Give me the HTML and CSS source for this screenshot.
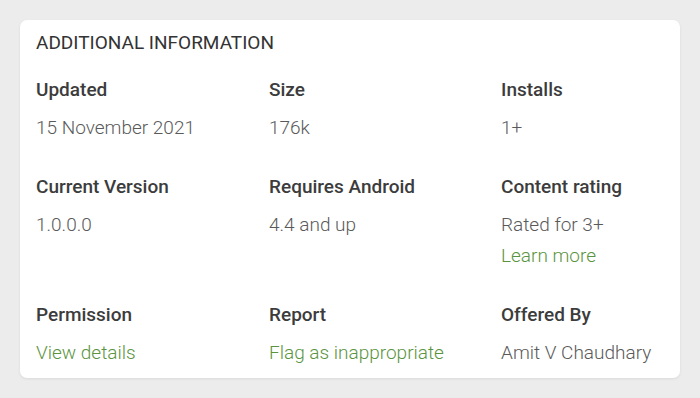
FILE: index.html
```html
<!DOCTYPE html>
<html>
<head>
<meta charset="utf-8">
<link rel="stylesheet" href="styles.css">
</head>
<body>
<section class="card">
  <h2 class="title">ADDITIONAL INFORMATION</h2>
  <div class="grid">
    <div class="cell">
      <div class="label">Updated</div>
      <div class="value">15 November 2021</div>
    </div>
    <div class="cell">
      <div class="label">Size</div>
      <div class="value">176k</div>
    </div>
    <div class="cell">
      <div class="label">Installs</div>
      <div class="value">1+</div>
    </div>
    <div class="cell">
      <div class="label">Current Version</div>
      <div class="value">1.0.0.0</div>
    </div>
    <div class="cell">
      <div class="label">Requires Android</div>
      <div class="value">4.4 and up</div>
    </div>
    <div class="cell">
      <div class="label">Content rating</div>
      <div class="value">Rated for 3+</div>
      <a class="value link" href="#">Learn more</a>
    </div>
    <div class="cell">
      <div class="label">Permission</div>
      <a class="value link" href="#">View details</a>
    </div>
    <div class="cell">
      <div class="label">Report</div>
      <a class="value link" href="#">Flag as inappropriate</a>
    </div>
    <div class="cell">
      <div class="label">Offered By</div>
      <div class="value">Amit V Chaudhary</div>
    </div>
  </div>
</section>
</body>
</html>
```
FILE: styles.css
```css
html, body {
  margin: 0;
  padding: 0;
}
body {
  background: #ececec;
  font-family: Roboto, "Liberation Sans", sans-serif;
  padding: 20px;
  width: 660px;
}
.card {
  background: #ffffff;
  border-radius: 7px;
  box-shadow: 0 1px 3px rgba(0,0,0,0.08);
  padding: 8px 16px 12px 16px;
  height: 358px;
  box-sizing: border-box;
}
.title {
  margin: 0;
  font-size: 19px;
  font-weight: 400;
  line-height: 30px;
  color: #333333;
}
.grid {
  display: grid;
  grid-template-columns: 233px 232px auto;
  row-gap: 30px;
  margin-top: 18px;
}
.cell {
  display: flex;
  flex-direction: column;
}
.label {
  font-size: 19px;
  font-weight: 500;
  color: #3c3c3c;
  line-height: 28px;
  margin-bottom: 8px;
}
.value {
  font-size: 19px;
  font-weight: 300;
  color: #5a5a5a;
  line-height: 31px;
  text-decoration: none;
}
.link {
  color: #5b9441;
}
```
